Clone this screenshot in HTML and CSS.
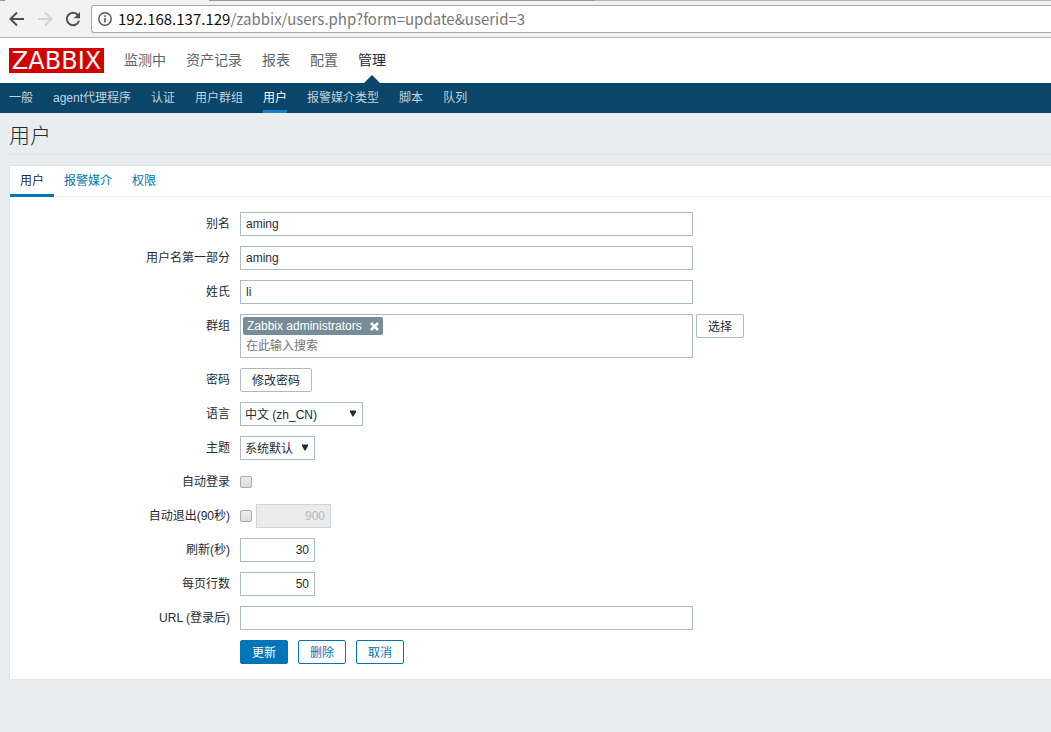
FILE: index.html
```html
<!DOCTYPE html>
<html lang="zh-CN">
<head>
<meta charset="utf-8">
<title>用户</title>
<link rel="stylesheet" href="styles.css">
</head>
<body>
<div class="browser">
  <div class="tabstrip"><span class="strip-gap"></span><span class="strip-tab"></span><span class="strip-dark"></span><span class="strip-light"></span></div>
  <div class="toolbar">
    <button class="tool" type="button" aria-label="后退"><svg width="16" height="16" viewBox="0 0 16 16"><path d="M15 8H2.500M8 1.500L1.500 8L8 14.500" fill="none" stroke="#505050" stroke-width="2"/></svg></button>
    <button class="tool" type="button" aria-label="前进"><svg width="16" height="16" viewBox="0 0 16 16"><path d="M1 8H13.500M8 1.500L14.500 8L8 14.500" fill="none" stroke="#d2d2d2" stroke-width="2"/></svg></button>
    <button class="tool" type="button" aria-label="重新加载"><svg width="16" height="16" viewBox="0 0 16 16"><path d="M13 4.200A6.200 6.200 0 1 0 14 9.800" fill="none" stroke="#505050" stroke-width="2"/><path d="M15 1V7.300H8.700Z" fill="#505050"/></svg></button>
    <div class="address">
      <svg width="14" height="14" viewBox="0 0 14 14"><circle cx="7" cy="7" r="6.200" fill="none" stroke="#555" stroke-width="1.400"/><path d="M6.200 6h1.600v4.500H6.200zM6.200 3.300h1.600v1.600H6.200z" fill="#555"/></svg>
      <span class="url"><span class="host">192.168.137.129</span>/zabbix/users.php?form=update&amp;userid=3</span>
    </div>
  </div>
</div>
<header class="header">
  <a class="logo" href="#">ZABBIX</a>
  <nav class="topnav">
    <a href="#">监测中</a>
    <a href="#">资产记录</a>
    <a href="#">报表</a>
    <a href="#">配置</a>
    <a href="#" class="active">管理</a>
  </nav>
</header>
<nav class="subnav">
  <a href="#">一般</a>
  <a href="#">agent代理程序</a>
  <a href="#">认证</a>
  <a href="#">用户群组</a>
  <a href="#" class="active">用户</a>
  <a href="#">报警媒介类型</a>
  <a href="#">脚本</a>
  <a href="#">队列</a>
</nav>
<main class="main">
  <h1 class="title">用户</h1>
  <form class="panel">
    <div class="tabs">
      <a href="#" class="active">用户</a>
      <a href="#">报警媒介</a>
      <a href="#">权限</a>
    </div>
    <div class="fields">
      <label class="label" for="alias">别名</label>
      <div class="field"><input class="text wide" id="alias" type="text" value="aming"></div>
      <label class="label" for="name">用户名第一部分</label>
      <div class="field"><input class="text wide" id="name" type="text" value="aming"></div>
      <label class="label" for="surname">姓氏</label>
      <div class="field"><input class="text wide" id="surname" type="text" value="li"></div>
      <label class="label" for="groups">群组</label>
      <div class="field groups">
        <div class="multiselect wide">
          <span class="chip">Zabbix administrators<button class="remove" type="button" aria-label="移除"><svg width="9" height="9" viewBox="0 0 9 9"><path d="M1 1L8 8M8 1L1 8" stroke="#fff" stroke-width="2.600"/></svg></button></span>
          <input class="search" id="groups" type="text" placeholder="在此输入搜索">
        </div>
        <button class="btn grey" type="button">选择</button>
      </div>
      <label class="label" for="password">密码</label>
      <div class="field"><button class="btn grey" id="password" type="button">修改密码</button></div>
      <label class="label" for="lang">语言</label>
      <div class="field"><span class="select lang"><select id="lang"><option>中文 (zh_CN)</option></select><svg class="arrow" width="6" height="7" viewBox="0 0 6 7"><path d="M0 0.500H6V2L3.500 6.500H2.500L0 2Z" fill="#1f2c33"/></svg></span></div>
      <label class="label" for="theme">主题</label>
      <div class="field"><span class="select theme"><select id="theme"><option>系统默认</option></select><svg class="arrow" width="6" height="7" viewBox="0 0 6 7"><path d="M0 0.500H6V2L3.500 6.500H2.500L0 2Z" fill="#1f2c33"/></svg></span></div>
      <label class="label" for="autologin">自动登录</label>
      <div class="field"><input class="check" id="autologin" type="checkbox"></div>
      <label class="label" for="autologout">自动退出(90秒)</label>
      <div class="field"><input class="check" id="autologout" type="checkbox"><input class="text num" type="text" value="900" aria-label="自动退出秒数" disabled></div>
      <label class="label" for="refresh">刷新(秒)</label>
      <div class="field"><input class="text num" id="refresh" type="text" value="30"></div>
      <label class="label" for="rows">每页行数</label>
      <div class="field"><input class="text num" id="rows" type="text" value="50"></div>
      <label class="label" for="url">URL (登录后)</label>
      <div class="field"><input class="text wide" id="url" type="text"></div>
      <div class="actions">
        <button class="btn primary" type="button">更新</button>
        <button class="btn" type="button">删除</button>
        <button class="btn" type="button">取消</button>
      </div>
    </div>
  </form>
</main>
</body>
</html>
```

FILE: styles.css
```css
* { box-sizing: border-box; }
body {
  margin: 0;
  background: #e9edf0;
  color: #1f2c33;
  font: 12px/24px "Liberation Sans", "Noto Sans CJK SC", sans-serif;
}
a { text-decoration: none; }
button, input, select { font: inherit; color: inherit; margin: 0; }

.browser { background: #f2f2f2; border-bottom: 1px solid #b4b4b4; }
.tabstrip { display: flex; height: 1px; }
.strip-gap { width: 5px; background: #999; }
.strip-tab { width: 204px; }
.strip-dark { width: 386px; background: #999; }
.strip-light { flex: 1; background: #b8b6b8; }
.toolbar { display: flex; align-items: center; gap: 12px; padding: 4px 0 4px 9px; }
.tool { display: flex; padding: 0; border: 0; background: none; }
.address {
  flex: 1;
  display: flex;
  align-items: center;
  gap: 6px;
  height: 28px;
  margin-left: -2px;
  padding-left: 6px;
  background: #fff;
  border: 1px solid #a8a8a8;
  border-right: 0;
  border-radius: 3px 0 0 3px;
}
.url { font: 15px/24px "Noto Sans CJK SC", sans-serif; color: #777; white-space: nowrap; }
.host { color: #111; }

.header { display: flex; align-items: center; height: 45px; padding: 0 9px; gap: 20px; background: #fff; }
.logo {
  width: 95px;
  height: 25px;
  background: #d40000;
  color: #fff;
  font: 24px/26px "DejaVu Sans", sans-serif;
  text-align: center;
}
.topnav { display: flex; gap: 20px; font-size: 14px; line-height: 45px; }
.topnav a { color: #5a6670; }
.topnav .active { position: relative; color: #1f2c33; }
.topnav .active::after {
  content: "";
  position: absolute;
  left: 50%;
  bottom: 0;
  margin-left: -8px;
  border: 8px solid transparent;
  border-top: 0;
  border-bottom-color: #0a466a;
}

.subnav { display: flex; gap: 20px; height: 30px; padding: 0 9px; background: #0a466a; line-height: 30px; }
.subnav a { color: #c4d3dc; }
.subnav .active { color: #fff; border-bottom: 3px solid #1483c8; }

.main { padding-left: 9px; }
.title {
  margin: 0 0 10px;
  height: 42px;
  border-bottom: 1px solid #dfe4e7;
  font-size: 21px;
  font-weight: 300;
  line-height: 46px;
}
.panel { background: #fff; border: 1px solid #dfe4e7; border-right: 0; }
.tabs { display: flex; height: 31px; border-bottom: 1px solid #ebeef0; line-height: 30px; }
.tabs a { height: 31px; padding: 0 10px; color: #0275b8; }
.tabs .active { padding: 0 10px; color: #1f2c33; border-bottom: 3px solid #0275b8; }

.fields { display: grid; grid-template-columns: 220px 1fr; gap: 10px; padding: 15px 0; }
.label { text-align: right; }
.field { display: flex; align-items: center; gap: 4px; }
.groups { align-items: flex-start; gap: 3px; }
.wide { width: 453px; }
.text { height: 24px; padding: 0 5px; border: 1px solid #acbbc2; background: #fff; line-height: 22px; }
.num { width: 75px; text-align: right; }
.text:disabled { background: #ebebeb; border-color: #ccd5d9; color: #acbbc2; }
.multiselect { display: flex; flex-direction: column; align-items: flex-start; height: 44px; padding: 2px; border: 1px solid #acbbc2; }
.chip {
  display: flex;
  align-items: center;
  gap: 8px;
  height: 18px;
  padding: 0 4px;
  border-radius: 2px;
  background: #768d99;
  color: #fff;
}
.remove { display: flex; padding: 0; border: 0; background: none; }
.search { width: 100%; height: 20px; padding: 2px 3px 0; border: 0; background: none; outline: 0; }
.search::placeholder { color: #757575; }
.btn {
  height: 24px;
  padding: 1px 11px 0;
  border: 1px solid #0275b8;
  border-radius: 2px;
  background: #fff;
  color: #0275b8;
  line-height: 22px;
}
.grey { border-color: #acbbc2; color: #1f2c33; }
.primary { background: #0275b8; color: #fff; }
.select { position: relative; display: flex; }
.select select {
  appearance: none;
  width: 100%;
  height: 24px;
  padding: 0 4px;
  border: 1px solid #acbbc2;
  border-radius: 0;
  background: #fff;
}
.lang { width: 123px; }
.theme { width: 75px; }
.arrow { position: absolute; right: 7px; top: 8px; pointer-events: none; }
.check {
  appearance: none;
  width: 12px;
  height: 12px;
  border: 1px solid #aaa;
  border-radius: 2px;
  background: linear-gradient(#ededed, #dcdcdc);
}
.actions { grid-column: 2; display: flex; gap: 10px; }
```
